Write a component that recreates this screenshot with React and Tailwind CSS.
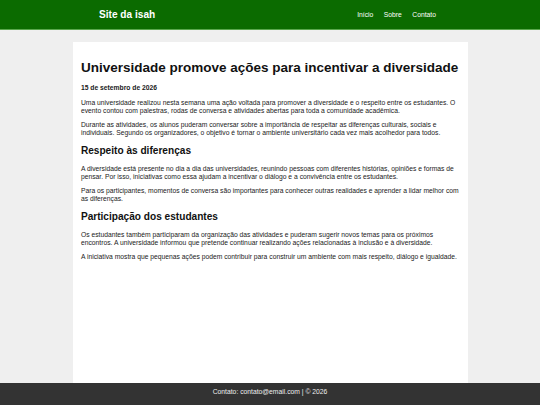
export default function App() {
  return (
    <div className="h-[405px] flex flex-col bg-[#efefef] font-['Liberation_Sans',Arial,sans-serif] text-[6.75px] leading-[1.15] text-[#1a1a1a]">
      <header className="h-[30px] shrink-0 bg-[#0b6b00] border-b border-[#5aa84d] flex items-center justify-between pl-[99px] pr-[104px] text-white">
        <div className="font-bold text-[10.125px]">Site da isah</div>
        <nav className="flex gap-[10.5px] text-[6.75px]">
          <span>Início</span>
          <span>Sobre</span>
          <span>Contato</span>
        </nav>
      </header>
      <main className="flex-1 pt-[12.3px] flex flex-col">
        <article className="flex-1 w-[395px] mx-auto bg-white p-[8.4px]">
          <h1 className="text-[13.5px] font-bold my-[9.05px] text-[#111]">Universidade promove ações para incentivar a diversidade</h1>
          <p className="font-bold my-[6.75px]">15 de setembro de 2026</p>
          <p className="my-[6.75px]">Uma universidade realizou nesta semana uma ação voltada para promover a diversidade e o respeito entre os estudantes. O evento contou com palestras, rodas de conversa e atividades abertas para toda a comunidade acadêmica.</p>
          <p className="my-[6.75px]">Durante as atividades, os alunos puderam conversar sobre a importância de respeitar as diferenças culturais, sociais e individuais. Segundo os organizadores, o objetivo é tornar o ambiente universitário cada vez mais acolhedor para todos.</p>
          <h2 className="text-[10.125px] font-bold my-[8.4px] text-[#111]">Respeito às diferenças</h2>
          <p className="my-[6.75px]">A diversidade está presente no dia a dia das universidades, reunindo pessoas com diferentes histórias, opiniões e formas de pensar. Por isso, iniciativas como essa ajudam a incentivar o diálogo e a convivência entre os estudantes.</p>
          <p className="my-[6.75px]">Para os participantes, momentos de conversa são importantes para conhecer outras realidades e aprender a lidar melhor com as diferenças.</p>
          <h2 className="text-[10.125px] font-bold my-[8.4px] text-[#111]">Participação dos estudantes</h2>
          <p className="my-[6.75px]">Os estudantes também participaram da organização das atividades e puderam sugerir novos temas para os próximos encontros. A universidade informou que pretende continuar realizando ações relacionadas à inclusão e à diversidade.</p>
          <p className="my-[6.75px]">A iniciativa mostra que pequenas ações podem contribuir para construir um ambiente com mais respeito, diálogo e igualdade.</p>
        </article>
      </main>
      <footer className="h-[22px] shrink-0 bg-[#333333] text-[#eeeeee] text-center pt-[4.5px]">
        Contato: contato@email.com | © 2026
      </footer>
    </div>
  );
}
